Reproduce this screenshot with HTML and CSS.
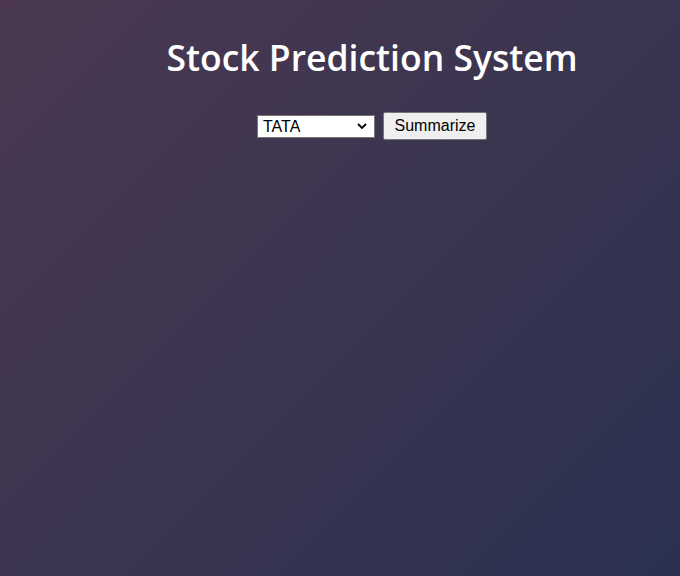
FILE: index.html
```html
<!DOCTYPE html>
<html>
<head>
<meta charset="utf-8">
<link rel="stylesheet" href="styles.css">
</head>
<body>
<div class="page">
  <h1 class="title">Stock Prediction System</h1>
  <form class="controls">
    <select class="stock-select">
      <option>TATA</option>
      <option>RELIANCE</option>
      <option>INFOSYS</option>
    </select>
    <button type="button" class="btn">Summarize</button>
  </form>
</div>
</body>
</html>
```
FILE: styles.css
```css
html, body {
  margin: 0;
  height: 100%;
}
body {
  background: linear-gradient(135deg, #4b3850 0%, #3b3550 50%, #2a3150 100%);
  font-family: "Open Sans", "Liberation Sans", sans-serif;
}
.page {
  padding-left: 64px;
  display: flex;
  flex-direction: column;
  align-items: center;
}
.title {
  margin: 33px 0 0;
  font-size: 35.5px;
  font-weight: 600;
  color: #ffffff;
  line-height: 49px;
}
.controls {
  margin-top: 30px;
  display: flex;
  align-items: center;
  gap: 8px;
}
.stock-select {
  -webkit-appearance: none;
  appearance: none;
  box-sizing: border-box;
  width: 118px;
  height: 23px;
  font-family: "Liberation Sans", Arial, sans-serif;
  font-size: 16px;
  line-height: 19px;
  border: 1px solid #767676;
  border-radius: 0;
  background-color: #fff;
  background-image: url("data:image/svg+xml,%3Csvg xmlns='http://www.w3.org/2000/svg' width='10' height='6' viewBox='0 0 10 6'%3E%3Cpath d='M1 1l4 4 4-4' fill='none' stroke='%23000' stroke-width='1.8'/%3E%3C/svg%3E");
  background-repeat: no-repeat;
  background-position: right 7px center;
  color: #000;
  padding: 0 20px 0 5px;
}
.btn {
  box-sizing: border-box;
  height: 28px;
  width: 104px;
  padding: 1px 6px;
  font-family: "Liberation Sans", Arial, sans-serif;
  font-size: 16px;
  color: #000;
  background: #efefef;
  border: 1px solid #767676;
  border-radius: 2px;
}
```
